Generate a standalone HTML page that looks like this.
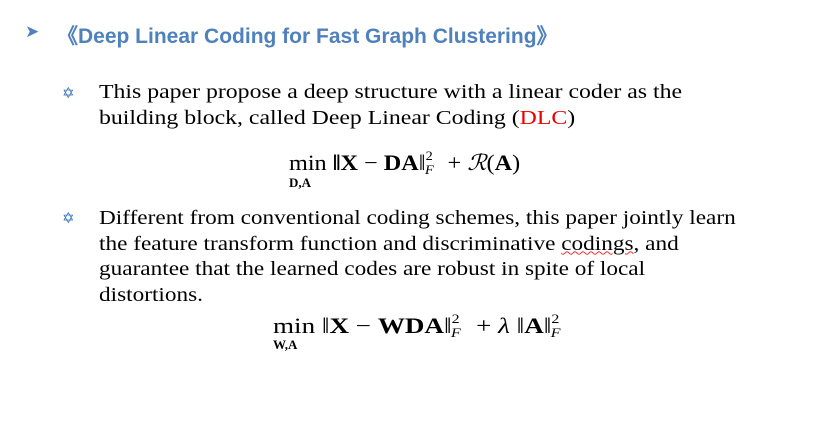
<!DOCTYPE html>
<html><head><meta charset="utf-8"><style>
body{margin:0;width:813px;height:434px;background:#fff;position:relative;overflow:hidden;font-family:"Liberation Serif",serif;color:#000}
.a{position:absolute;white-space:nowrap}
.t{font-family:"Liberation Sans",sans-serif;font-weight:bold;font-size:21px;color:#4f81bd;left:57px;top:20px}
.p{font-size:20.5px;line-height:25.5px;left:99px;transform-origin:0 0}
.s{color:#2e6db4;font-size:15px;left:62px}
.m{transform-origin:0 0}
.b{font-weight:bold}
</style></head><body>
<div class="a" style="left:25px;top:22px;color:#4f81bd;font-size:17px">&#10148;</div>
<div class="a t">《Deep Linear Coding for Fast Graph Clustering》</div>
<div class="a s" style="top:84px">✡</div>
<div class="a p" style="top:80px;transform:scaleX(1.16)">This paper propose a deep structure with a linear coder as the<br>building block, called Deep Linear Coding (<span style="color:#e00">DLC</span>)</div>
<div class="a m" style="left:289px;top:150px;font-size:22px;transform:scaleX(1.1)">min <span class="b">‖X</span> − <span class="b">DA</span>‖<span style="position:relative;font-size:13px;top:-10px">2</span><i style="font-size:13px;position:relative;top:4px;left:-7px">F</i> + <i>ℛ</i>(<span class="b">A</span>)</div>
<div class="a b" style="left:289px;top:175px;font-size:13px">D,A</div>
<div class="a s" style="top:209px">✡</div>
<div class="a p" style="top:206px;transform:scaleX(1.134)">Different from conventional coding schemes, this paper jointly learn<br>the feature transform function and discriminative <span style="text-decoration:underline wavy #e33;text-decoration-thickness:1px">codings</span>, and<br>guarantee that the learned codes are robust in spite of local<br>distortions.</div>
<div class="a m" style="left:273px;top:313px;font-size:22px;transform:scaleX(1.23)">min ‖<span class="b">X</span> − <span class="b">WDA</span>‖<span style="position:relative;font-size:13px;top:-10px">2</span><i style="font-size:13px;position:relative;top:4px;left:-7px">F</i> + <i>λ</i> ‖<span class="b">A</span>‖<span style="position:relative;font-size:13px;top:-10px">2</span><i style="font-size:13px;position:relative;top:4px;left:-7px">F</i></div>
<div class="a b" style="left:273px;top:337px;font-size:13px">W,A</div>
</body></html>
